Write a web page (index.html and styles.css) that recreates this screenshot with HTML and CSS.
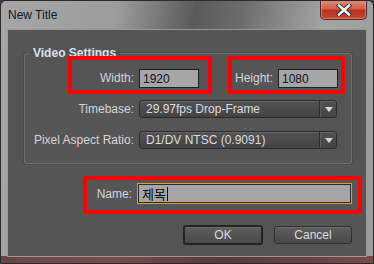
FILE: index.html
```html
<!DOCTYPE html>
<html lang="en">
<head>
    <meta charset="UTF-8">
    <meta name="viewport" content="width=device-width, initial-scale=1.0">
    <title>New Title</title>
    <link rel="stylesheet" href="styles.css">
</head>
<body>
    <div class="window">
        <div class="titlebar">
            <span class="title">New Title</span>
            <button class="close" aria-label="Close">
                <svg width="16" height="12" viewBox="0 0 16 12">
                    <path d="M3 1.5 L13 10.5 M13 1.5 L3 10.5" stroke="#333" stroke-width="4.5" stroke-linecap="square"/>
                    <path d="M3 1.5 L13 10.5 M13 1.5 L3 10.5" stroke="#f4f4f4" stroke-width="2.5" stroke-linecap="square"/>
                </svg>
            </button>
        </div>
        <div class="client">
            <fieldset class="group">
                <legend>Video Settings</legend>
                <div class="size-row">
                    <div class="mark mark-width">
                        <label>Width:</label>
                        <input class="field" type="text" value="1920">
                    </div>
                    <div class="mark mark-height">
                        <label>Height:</label>
                        <input class="field" type="text" value="1080">
                    </div>
                </div>
                <div class="row">
                    <label>Timebase:</label>
                    <div class="select">
                        <span class="select-text">29.97fps Drop-Frame</span>
                        <span class="select-arrow"></span>
                    </div>
                </div>
                <div class="row">
                    <label>Pixel Aspect Ratio:</label>
                    <div class="select">
                        <span class="select-text">D1/DV NTSC (0.9091)</span>
                        <span class="select-arrow"></span>
                    </div>
                </div>
            </fieldset>
            <div class="mark mark-name">
                <label>Name:</label>
                <div class="field name-field"><span>제목</span><span class="caret"></span></div>
            </div>
            <div class="buttons">
                <button class="button default">OK</button>
                <button class="button">Cancel</button>
            </div>
        </div>
    </div>
</body>
</html>
```

FILE: styles.css
```css
body {
    margin: 0;
    background-color: #3c3c3c;
    font-family: "Liberation Sans", Arial, sans-serif;
}
.window {
    width: 374px;
    height: 264px;
    box-sizing: border-box;
    border: 1px solid #2a2a2a;
    border-radius: 6px 6px 3px 3px;
    background: linear-gradient(100deg, #a6a6a6 0%, #9c9c9c 28%, #5a5a5a 47%, #6c6c6c 58%, #a4a4a4 78%, #9a9a9a 100%);
    position: relative;
    overflow: hidden;
}
.window::after {
    content: "";
    position: absolute;
    left: 0;
    right: 0;
    bottom: 0;
    height: 7px;
    background: linear-gradient(90deg, #6a4444, #7a4a4a 30%, #5a3a3a 60%, #7a4848);
}
.titlebar {
    height: 28px;
    display: flex;
    justify-content: space-between;
    align-items: flex-start;
}
.title {
    margin: 7px 0 0 7px;
    font-size: 12px;
    color: #14142a;
}
.close {
    width: 47px;
    height: 20px;
    margin: -1px 6px 0 0;
    padding: 0;
    border: 1px solid #4a2a22;
    border-top: none;
    border-radius: 0 0 5px 5px;
    background: linear-gradient(#e0907c 0%, #d06048 45%, #b8301c 55%, #c84a30 100%);
    box-shadow: inset 0 0 0 1px rgba(255, 200, 180, 0.4);
    display: flex;
    align-items: center;
    justify-content: center;
}
.client {
    margin: 0 6px;
    height: 228px;
    box-sizing: border-box;
    border: 1px solid #9a9a9a;
    background-color: #555555;
    position: relative;
    z-index: 1;
}
.group {
    margin: 16px 14px 0 16px;
    padding: 0 0 14px 0;
    border: 1px solid #6e6e6e;
    border-radius: 3px;
    box-shadow: 0 0 0 1px #4a4a4a;
}
.group legend {
    margin-left: 4px;
    padding: 0 4px;
    font-size: 12px;
    font-weight: bold;
    color: #dce2ee;
}
label {
    font-size: 12px;
    color: #d4d6dc;
}
.mark {
    border: 4px solid #ff0000;
    box-sizing: border-box;
    height: 38px;
    display: flex;
    align-items: flex-end;
    justify-content: flex-end;
    gap: 5px;
    padding-bottom: 2px;
}
.size-row {
    display: flex;
    margin: -4px 0 0 43px;
    gap: 16px;
}
.mark-width {
    width: 144px;
    padding-right: 9px;
}
.mark-height {
    width: 117px;
    padding-right: 3px;
}
.mark label {
    margin-bottom: 3px;
}
.field {
    width: 60px;
    height: 19px;
    box-sizing: border-box;
    border: 1px solid #1e1e1e;
    background-color: #a6a6a6;
    font-family: "Liberation Sans", Arial, sans-serif;
    font-size: 12px;
    color: #10102a;
    padding: 0 3px;
    margin: 0;
}
.row {
    display: grid;
    grid-template-columns: 109px 198px;
    column-gap: 5px;
    align-items: center;
    margin-top: 6px;
}
.row + .row {
    margin-top: 13px;
}
.row label {
    text-align: right;
}
.select {
    height: 18px;
    box-sizing: border-box;
    border: 1px solid #2c2c2c;
    border-radius: 3px;
    background: linear-gradient(#525252, #444444);
    box-shadow: inset 0 1px 0 #666;
    display: flex;
    align-items: center;
}
.select-text {
    flex: 1;
    padding-left: 6px;
    font-size: 12px;
    color: #dcdde2;
}
.select-arrow {
    width: 16px;
    height: 100%;
    border-left: 1px solid #2e2e2e;
    box-shadow: inset 1px 0 0 #5e5e5e;
    position: relative;
}
.select-arrow::after {
    content: "";
    position: absolute;
    left: 5px;
    top: 6px;
    border-left: 4px solid transparent;
    border-right: 4px solid transparent;
    border-top: 5px solid #d8d8d8;
}
.mark-name {
    margin: 12px 4px 0 75px;
    padding-right: 6px;
    padding-bottom: 6px;
}
.mark-name label {
    margin-bottom: 3px;
}
.name-field {
    width: 215px;
    height: 21px;
    border: 1px solid #e8a010;
    box-shadow: inset 0 0 0 1px #2a2a2a;
    display: flex;
    align-items: center;
    padding-left: 4px;
    font-family: "Noto Sans CJK KR", sans-serif;
    font-size: 13px;
    color: #000;
}
.caret {
    width: 1px;
    height: 14px;
    background-color: #111;
    margin-left: 1px;
}
.buttons {
    display: flex;
    justify-content: flex-end;
    gap: 11px;
    margin: 11px 14px 0 0;
    align-items: center;
}
.button {
    width: 78px;
    height: 18px;
    border: 1px solid #2e2e2e;
    border-radius: 3px;
    background: linear-gradient(#5e5e5e, #4a4a4a);
    box-shadow: inset 0 1px 0 #6e6e6e;
    font-family: "Liberation Sans", Arial, sans-serif;
    font-size: 12px;
    color: #dcdde2;
    padding: 0;
}
.button.default {
    width: 80px;
    height: 20px;
    border: 2px solid #222;
}
```
